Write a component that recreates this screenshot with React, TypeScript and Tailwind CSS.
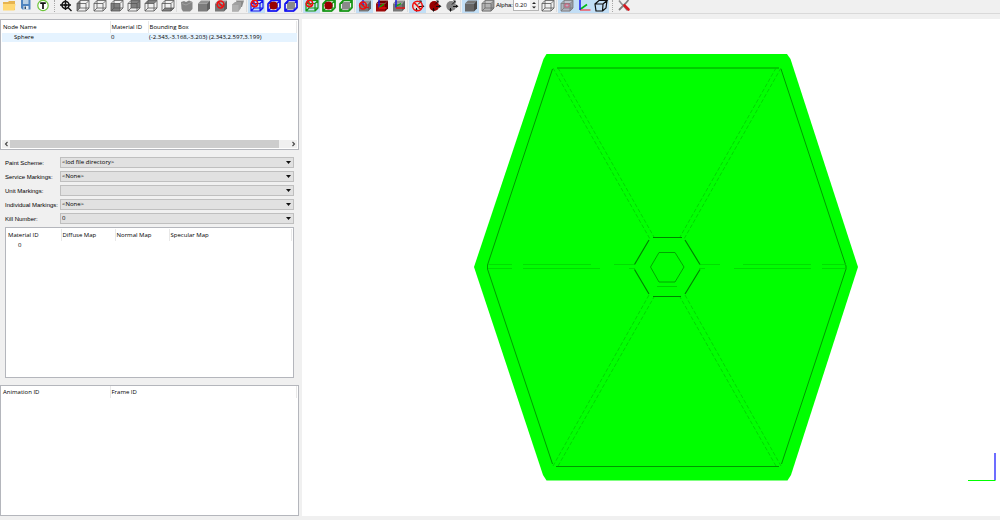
import type { ReactNode } from 'react';
import clsx from 'clsx';

// ─────────────────────────────────────────────────────────────────────────────
// Toolbar icons
// ─────────────────────────────────────────────────────────────────────────────

const Icon = ({ children }: { children: ReactNode }) => (
  <svg width="14" height="12" viewBox="0 0 14 12" fill="none" aria-hidden="true">
    {children}
  </svg>
);

type Face = 'left' | 'right' | 'front' | 'back' | 'top' | 'bottom' | 'none';

const FACE_PATHS: Record<Face, string> = {
  left: 'M1 3.5L4 .5V8L1 11z',
  right: 'M10 3.5L13 .5V8L10 11z',
  front: 'M1 3.5H10V11H1z',
  back: 'M4 .5H13V8H4z',
  top: 'M1 3.5L4 .5H13L10 3.5z',
  bottom: 'M1 11L4 8H13L10 11z',
  none: '',
};

const Wire = ({ color = '#555', width = 0.8 }: { color?: string; width?: number }) => (
  <path
    d="M1 3.5H10V11H1zM4 .5H13V8H4zM1 3.5L4 .5M10 3.5L13 .5M10 11L13 8M1 11L4 8"
    stroke={color}
    strokeWidth={width}
    strokeLinejoin="round"
  />
);

const FaceCube = ({ face }: { face: Face }) => (
  <Icon>
    <path d={FACE_PATHS[face]} fill="#808080" />
    <Wire />
  </Icon>
);

const Solid = ({ front = '#777', top = '#929292', side = '#606060' }) => (
  <>
    <path d="M1 3.5H10V11.5H1z" fill={front} />
    <path d="M1 3.5L4 .5H13L10 3.5z" fill={top} />
    <path d="M10 3.5L13 .5V8.5L10 11.5z" fill={side} />
  </>
);

const Forbidden = ({ cx, cy, r }: { cx: number; cy: number; r: number }) => (
  <g stroke="#f01010" strokeWidth="1.5">
    <circle cx={cx} cy={cy} r={r} />
    <path d={`M${cx - r * 0.7} ${cy - r * 0.7}L${cx + r * 0.7} ${cy + r * 0.7}`} />
  </g>
);

const WireForbidden = ({ color }: { color: string }) => (
  <Icon>
    <Wire color={color} width={1.2} />
    <Forbidden cx={4.5} cy={3.5} r={3.2} />
  </Icon>
);

const WireBall = ({ color }: { color: string }) => (
  <Icon>
    <Wire color={color} width={1.2} />
    <circle cx="6.5" cy="5.5" r="4.1" fill="#980000" />
    <path d="M1 3.5V11H10M4 .5H13V8" stroke={color} strokeWidth="1.3" />
  </Icon>
);

const WireBox = ({ color }: { color: string }) => (
  <Icon>
    <Wire color={color} width={1.2} />
    <path d="M3 3.5L5 2H11V7.5L9 9.5H3z" fill="#8a8a8a" />
    <path d="M1 3.5V11H10M4 .5H13V8" stroke={color} strokeWidth="1.3" />
  </Icon>
);

const Ball = ({ fill }: { fill: string }) => (
  <>
    <circle cx="6.2" cy="6" r="4.9" fill={fill} />
    <path d="M7 4.5L10 1.5M8 6.5H12M5.5 8V11" stroke="#111" />
    <path d="M8 .5H10.5V3zM11 4.5L13.5 6.3L11 8zM4.2 9.5H6.8L5.5 12z" fill="#111" />
  </>
);

const OpenIcon = () => (
  <Icon>
    <path d="M1 2H6L7 1H13V10H1z" fill="#e6b450" />
    <path d="M1 4H13.5L12.5 10.5H1z" fill="#ffd873" />
  </Icon>
);

const SaveIcon = () => (
  <Icon>
    <path d="M2 0H11.5V9.5H3.5L2 8z" fill="#4f83bf" />
    <path d="M4 0H9.5V4H4z" fill="#b9cfe4" />
    <path d="M4.5 6H9.5V9.5H4.5z" fill="#e8eef4" />
    <path d="M5.5 6.5H7V9H5.5z" fill="#334e6d" />
  </Icon>
);

const ReloadIcon = () => (
  <Icon>
    <circle cx="7" cy="5.5" r="5.2" fill="#fff" stroke="#6cc43a" strokeWidth="1.2" />
    <path d="M4.2 3.2H9.8M7 3.2V9" stroke="#111" strokeWidth="1.7" />
  </Icon>
);

const ZoomFitIcon = () => (
  <Icon>
    <circle cx="6.5" cy="5" r="3.5" fill="#fff" stroke="#151515" strokeWidth="1.6" />
    <path d="M6.5 0V10M1 5H12M9 7.5L12.5 11" stroke="#151515" strokeWidth="1.4" />
    <circle cx="6.5" cy="5" r="1.5" fill="#151515" />
  </Icon>
);

const ToolsIcon = () => (
  <Icon>
    <path d="M2 .5L4 3L10.5 10.5" stroke="#909090" strokeWidth="1.6" />
    <path d="M11.5 0L8.5 3.5L2 10" stroke="#808080" strokeWidth="1.8" />
    <path d="M7.5 5.5L11.5 9.5" stroke="#d71920" strokeWidth="2.6" strokeLinecap="round" />
  </Icon>
);

const AxesIcon = () => (
  <Icon>
    <path d="M3 9.5L10 4.5" stroke="#00b918" strokeWidth="1.6" />
    <path d="M3 10H13.5" stroke="#f0505a" strokeWidth="1.4" />
    <path d="M3 0V10" stroke="#1919f0" strokeWidth="1.5" />
  </Icon>
);

const CameraBoxIcon = () => (
  <Icon>
    <path d="M1 4H9L8.5 11H2zM1 4L5 .5H13L9 4M13 .5L12 8L8.5 11" stroke="#111" strokeWidth="1.2" />
  </Icon>
);

// ─────────────────────────────────────────────────────────────────────────────
// Toolbar
// ─────────────────────────────────────────────────────────────────────────────

type Tool = { label: string; icon: ReactNode; checked?: boolean };

const FILE_TOOLS: Tool[] = [
  { label: 'Open', icon: <OpenIcon /> },
  { label: 'Save', icon: <SaveIcon /> },
  { label: 'Reload textures', icon: <ReloadIcon /> },
];

const VIEW_TOOLS: Tool[] = [
  { label: 'Zoom to fit', icon: <ZoomFitIcon /> },
  { label: 'Left view', icon: <FaceCube face="left" /> },
  { label: 'Right view', icon: <FaceCube face="none" /> },
  { label: 'Front view', icon: <FaceCube face="front" /> },
  { label: 'Back view', icon: <FaceCube face="back" /> },
  { label: 'Top view', icon: <FaceCube face="top" /> },
  { label: 'Bottom view', icon: <FaceCube face="bottom" /> },
];

const SHAPE_TOOLS: Tool[] = [
  {
    label: 'Smooth shape',
    icon: (
      <Icon>
        <path d="M1 2L4 1L6 2L9 .5L12.5 2V9L10 11.5H3L1.5 9z" fill="#858585" />
        <path d="M2 3.5L6 5L12 2" stroke="#a0a0a0" />
      </Icon>
    ),
  },
  { label: 'Solid shape', icon: <Icon><Solid front="#7c7c7c" /></Icon> },
  { label: 'No shape', icon: <Icon><Solid /><Forbidden cx={6.5} cy={4.5} r={3.4} /></Icon> },
  {
    label: 'Layered shape',
    icon: (
      <Icon>
        <path d="M5 .5H13L11 7H7z" fill="#8a8a8a" />
        <path d="M1 4.5L4 2H10V8L7.5 11.5H1z" fill="#a0a0a0" />
        <path d="M1 5H7.5V11.5H1z" fill="#b0b0b0" />
      </Icon>
    ),
  },
];

const BOX_TOOLS: Tool[] = [
  { label: 'Hide bounding boxes', icon: <WireForbidden color="#1414f0" />, checked: true },
  { label: 'Selected bounding box', icon: <WireBall color="#1414f0" /> },
  { label: 'All bounding boxes', icon: <WireBox color="#1414f0" /> },
];

const SPHERE_TOOLS: Tool[] = [
  { label: 'Hide bounds', icon: <WireForbidden color="#159515" />, checked: true },
  { label: 'Selected bounds', icon: <WireBall color="#159515" /> },
  { label: 'All bounds', icon: <WireBox color="#159515" /> },
];

const AXIS_TOOLS: Tool[] = [
  {
    label: 'Hide node axes',
    icon: (
      <Icon>
        <Solid />
        <path d="M5 0V6" stroke="#1414e8" strokeWidth="1.3" />
        <Forbidden cx={5} cy={5.5} r={3.4} />
        <path d="M7 7.5H11" stroke="#d11" strokeWidth="1.2" />
      </Icon>
    ),
    checked: true,
  },
  {
    label: 'Selected node axes',
    icon: (
      <Icon>
        <Solid front="#a00808" top="#720000" side="#600" />
        <path d="M4 0V7.5" stroke="#1414e8" strokeWidth="1.4" />
        <path d="M4 7.5L9 4" stroke="#0b0" strokeWidth="1.4" />
        <path d="M4 8H11.5" stroke="#e11" strokeWidth="1.4" />
      </Icon>
    ),
  },
  {
    label: 'All node axes',
    icon: (
      <Icon>
        <Solid />
        <path d="M4 0V7.5" stroke="#1414e8" strokeWidth="1.4" />
        <path d="M4.5 6L9 3.5" stroke="#0b0" strokeWidth="1.4" />
        <path d="M4 8H13" stroke="#e11" strokeWidth="1.4" />
      </Icon>
    ),
  },
];

const NORMAL_TOOLS: Tool[] = [
  {
    label: 'Hide normals',
    icon: <Icon><Ball fill="#ddd" /><Forbidden cx={6.5} cy={6} r={4.8} /></Icon>,
    checked: true,
  },
  { label: 'Selected normals', icon: <Icon><Ball fill="#980000" /></Icon> },
  { label: 'All normals', icon: <Icon><Ball fill="#858585" /></Icon> },
];

const RENDER_TOOLS: Tool[] = [
  { label: 'Opaque', icon: <Icon><Solid front="#666" top="#777" side="#484848" /></Icon>, checked: true },
  { label: 'Translucent', icon: <Icon><Solid front="#b4b4b4" top="#c4c4c4" side="#999" /><Wire color="#6a6a6a" /></Icon> },
];

const SCENE_TOOLS: Tool[] = [
  {
    label: 'Back faces',
    icon: (
      <Icon>
        <Solid front="#b0b4be" top="#bcc2cc" side="#999da8" />
        <Wire color="#777" />
        <path d="M5 4H9V7H5z" stroke="#d05070" strokeWidth="0.9" />
      </Icon>
    ),
    checked: true,
  },
  { label: 'World axes', icon: <AxesIcon />, checked: true },
  { label: 'Perspective', icon: <CameraBoxIcon />, checked: true },
];

const ToolGroup = ({ tools }: { tools: Tool[] }) => (
  <div className="flex">
    {tools.map(({ label, icon, checked }) => (
      <button
        key={label}
        type="button"
        aria-label={label}
        aria-pressed={checked}
        className={clsx('flex h-[13px] w-[17px] items-start justify-center', checked && 'bg-[#c2def5]')}
      >
        {icon}
      </button>
    ))}
  </div>
);

const Separator = () => <div className="h-3 w-0.5 border-l border-[#dcdcdc]" />;

const Grip = () => <div className="mr-0.5 h-3 w-1 border-r border-dotted border-[#a8a8a8]" />;

const Toolbar = () => (
  <header className="flex h-[14px] shrink-0 items-start overflow-hidden border-b border-[#d9d9d9]">
    <ToolGroup tools={FILE_TOOLS} />
    <Grip />
    <ToolGroup tools={VIEW_TOOLS} />
    <Separator />
    <ToolGroup tools={SHAPE_TOOLS} />
    <Separator />
    <ToolGroup tools={BOX_TOOLS} />
    <div className="w-0.5" />
    <Separator />
    <ToolGroup tools={SPHERE_TOOLS} />
    <Separator />
    <ToolGroup tools={AXIS_TOOLS} />
    <Separator />
    <ToolGroup tools={NORMAL_TOOLS} />
    <Separator />
    <ToolGroup tools={RENDER_TOOLS} />
    <label
      htmlFor="alpha"
      className="w-[17px] font-['Liberation_Sans',sans-serif] leading-[11px] whitespace-nowrap"
    >
      Alpha:
    </label>
    <div className="flex h-[11px] w-[26px] border border-t-0 border-[#b5b5b5] bg-white">
      <input
        id="alpha"
        defaultValue="0.20"
        className="h-[10px] w-4 pl-px text-[6px] leading-[10px] outline-none"
      />
      <svg width="8" height="10" viewBox="0 0 8 10" className="bg-[#f0f0f0]" aria-hidden="true">
        <path d="M2 4L4 2L6 4zM2 6.5L4 8.5L6 6.5z" fill="#222" />
      </svg>
    </div>
    <ToolGroup tools={[{ label: 'Wireframe', icon: <FaceCube face="none" /> }]} />
    <Separator />
    <ToolGroup tools={SCENE_TOOLS} />
    <Grip />
    <ToolGroup tools={[{ label: 'Settings', icon: <ToolsIcon /> }]} />
  </header>
);

// ─────────────────────────────────────────────────────────────────────────────
// Side panel
// ─────────────────────────────────────────────────────────────────────────────

const HEAD_CELL = 'h-3 border-r border-[#e8e8e8] p-0 pl-px text-left font-normal whitespace-nowrap';
const BODY_CELL = 'h-[9px] p-0 whitespace-nowrap';

const NodeList = () => (
  <div className="flex h-[131px] flex-col border border-[#b4b6bc] bg-white p-px">
    <table className="w-full table-fixed border-collapse">
      <thead>
        <tr>
          <th className={clsx(HEAD_CELL, 'w-[108px]')}>Node Name</th>
          <th className={clsx(HEAD_CELL, 'w-[38px]')}>Material ID</th>
          <th className={HEAD_CELL}>Bounding Box</th>
        </tr>
      </thead>
      <tbody>
        <tr className="bg-[#e5f3ff]">
          <td className={clsx(BODY_CELL, 'pl-3')}>Sphere</td>
          <td className={clsx(BODY_CELL, 'pl-px')}>0</td>
          <td className={clsx(BODY_CELL, 'pl-px')}>(-2.343,-3.168,-3.203) (2.343,2.597,3.199)</td>
        </tr>
      </tbody>
    </table>
    <div className="mt-auto flex h-2 items-center bg-[#f0f0f0]">
      <button type="button" aria-label="Scroll left" className="flex w-2 shrink-0 justify-center">
        <svg width="5" height="6" viewBox="0 0 5 6" fill="none" aria-hidden="true">
          <path d="M3.5 1L1.5 3L3.5 5" stroke="#444" strokeWidth="1.1" />
        </svg>
      </button>
      <div className="mr-[10px] h-2 flex-1 bg-[#cdcdcd]" />
      <button type="button" aria-label="Scroll right" className="flex w-2 shrink-0 justify-center">
        <svg width="5" height="6" viewBox="0 0 5 6" fill="none" aria-hidden="true">
          <path d="M1.5 1L3.5 3L1.5 5" stroke="#444" strokeWidth="1.1" />
        </svg>
      </button>
    </div>
  </div>
);

const FIELDS = [
  { id: 'paint', label: 'Paint Scheme:', value: '<lod file directory>' },
  { id: 'service', label: 'Service Markings:', value: '<None>' },
  { id: 'unit', label: 'Unit Markings:', value: '' },
  { id: 'individual', label: 'Individual Markings:', value: '<None>' },
  { id: 'kill', label: 'Kill Number:', value: '0' },
];

const MarkingsForm = () => (
  <form className="flex flex-col gap-[3px] px-[5px] pt-[7px]">
    {FIELDS.map(({ id, label, value }) => (
      <div key={id} className="flex h-[11px] items-center">
        <label
          htmlFor={id}
          className="w-[55px] shrink-0 font-['Liberation_Sans',sans-serif] leading-3 whitespace-nowrap"
        >
          {label}
        </label>
        <div className="relative h-[11px] flex-1">
          <select
            id={id}
            defaultValue={value}
            className="block h-[11px] w-full appearance-none border border-[#bfbfbf] bg-[#e1e1e1] px-px text-[6px] leading-[9px]"
          >
            <option value={value}>{value}</option>
          </select>
          <svg
            width="5"
            height="3"
            viewBox="0 0 5 3"
            className="pointer-events-none absolute top-1 right-[3px]"
            aria-hidden="true"
          >
            <path d="M0 0H5L2.5 3z" fill="#111" />
          </svg>
        </div>
      </div>
    ))}
  </form>
);

const MaterialTable = () => (
  <div className="mx-[5px] mt-[3px] h-[151px] border border-[#b4b6bc] bg-white p-px">
    <table className="w-full table-fixed border-collapse">
      <thead>
        <tr>
          <th className={clsx(HEAD_CELL, 'w-[54px]')}>Material ID</th>
          <th className={clsx(HEAD_CELL, 'w-[54px]')}>Diffuse Map</th>
          <th className={clsx(HEAD_CELL, 'w-[54px]')}>Normal Map</th>
          <th className={HEAD_CELL}>Specular Map</th>
        </tr>
      </thead>
      <tbody>
        <tr>
          <td className={clsx(BODY_CELL, 'pl-[11px]')}>0</td>
          <td className={BODY_CELL} />
          <td className={BODY_CELL} />
          <td className={BODY_CELL} />
        </tr>
      </tbody>
    </table>
  </div>
);

const AnimationTable = () => (
  <div className="mt-[7px] min-h-0 flex-1 border border-[#b4b6bc] bg-white px-px">
    <table className="w-full table-fixed border-collapse">
      <thead>
        <tr>
          <th className={clsx(HEAD_CELL, 'w-[108px]')}>Animation ID</th>
          <th className={HEAD_CELL}>Frame ID</th>
        </tr>
      </thead>
    </table>
  </div>
);

// ─────────────────────────────────────────────────────────────────────────────
// Viewport
// ─────────────────────────────────────────────────────────────────────────────

const Model = () => (
  <svg viewBox="302 19 698 497" className="h-full w-full" fill="none" role="img" aria-label="Sphere">
    <path
      d="M546.5 54H787L790.5 59L858 267L791 475L787.5 480.5H546.5L543 475L474 267L543.5 59z"
      fill="#00ff00"
    />
    {/* panel outline */}
    <path
      d="M557 68H779M781 69L846 266V269L781.5 464M779 466.5H556M552.5 464L487.5 269V265L552.5 69"
      stroke="#009800"
    />
    {/* diagonal seams */}
    <g stroke="#00c400" strokeWidth="0.7" strokeDasharray="4 2">
      <path d="M553 68L650 239M558 68L654 237M781 68L684 239M776 68L680 237" />
      <path d="M553 466L649 295M558 466L654 297M781 466L685 295M776 466L680 297" />
    </g>
    {/* horizontal seams */}
    <g stroke="#00d600" strokeWidth="0.8">
      <path d="M488 264.5H512M523 264.5H591M614 264.5H634M488 268.5H512M523 268.5H600M629 268.5H635" />
      <path d="M846 264.5H822M811 264.5H743M720 264.5H700M846 268.5H822M811 268.5H734M705 268.5H699" />
    </g>
    {/* hub */}
    <path
      d="M653 237.5H682M685 240L700 264.5M700 269.5L685 294M681 296.5H653M649 294L634.5 269.5M634.5 264.5L649 240"
      stroke="#008400"
      strokeWidth="1.2"
    />
    <path d="M659 252.5H675L684 267L675 282H659L650.5 267z" stroke="#009c00" strokeWidth="0.9" />
    <path d="M657 286.5H677" stroke="#00c800" strokeWidth="0.8" />
  </svg>
);

const AxisGizmo = () => (
  <svg
    width="32"
    height="30"
    viewBox="0 0 32 30"
    fill="none"
    className="absolute right-0 bottom-[34px]"
    aria-hidden="true"
  >
    <path d="M27 1V28" stroke="#3c3cff" strokeWidth="1.5" />
    <path d="M0 28.5H27.5" stroke="#00ff00" />
  </svg>
);

const App = () => (
  <div className="flex h-screen flex-col bg-[#f0f0f0] font-['Open_Sans','Noto_Sans',sans-serif] text-[6px] leading-[9px] text-black">
    <Toolbar />
    <div className="flex min-h-0 flex-1 pt-[5px] pb-1">
      <aside className="mr-[3px] flex w-[299px] shrink-0 flex-col">
        <NodeList />
        <MarkingsForm />
        <MaterialTable />
        <AnimationTable />
      </aside>
      <main className="relative min-w-0 flex-1 bg-white">
        <Model />
        <AxisGizmo />
      </main>
    </div>
  </div>
);

export default App;
